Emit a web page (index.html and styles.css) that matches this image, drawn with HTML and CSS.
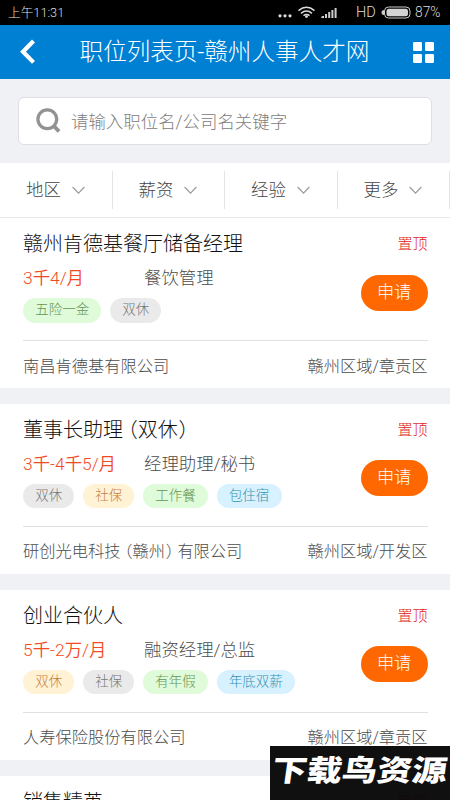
FILE: index.html
```html
<!DOCTYPE html>
<html lang="zh-CN">
<head>
<meta charset="utf-8">
<title>职位列表页-赣州人事人才网</title>
<link rel="stylesheet" href="styles.css">
</head>
<body>
<div class="status">
  <span class="time">上午11:31</span>
  <svg class="status-icons" width="78" height="25" viewBox="0 0 78 25" fill="none">
    <g fill="#ddd"><circle cx="2" cy="15.8" r="1.6"/><circle cx="7" cy="15.8" r="1.6"/><circle cx="12" cy="15.8" r="1.6"/></g>
    <g stroke="#ddd" stroke-width="1.5"><path d="M20.5 10.6Q28.500 4 36.500 10.600M23 13.300Q28.500 8.800 34 13.300M25.500 15.600Q28.500 13.200 31.500 15.600"/></g>
    <circle cx="28.500" cy="16.600" r="1.400" fill="#ddd"/>
    <g fill="#ccc"><path d="M44 16h2v2h-3zM47 14h2v4h-2zM50.200 12h2v6h-2zM53.400 10h2v8h-2zM56.600 8h2v10h-2z"/></g>
  </svg>
  <span class="hd">HD</span>
  <svg class="battery" width="30" height="13" viewBox="0 0 30 13"><rect x="3.500" y="1" width="25.500" height="11" rx="4" fill="none" stroke="#ccc"/><rect x="5.500" y="2.700" width="21.500" height="7.600" rx="2.500" fill="#d5d5d5"/><path d="M3 4Q.5 4 .5 6.500T3 9z" fill="#ccc"/></svg>
  <span class="pct">87%</span>
</div>
<header class="header">
  <svg class="back" width="16" height="26" viewBox="0 0 16 26"><path d="M13.500 2 3 12.700 13.500 23.400" fill="none" stroke="#fff" stroke-width="4.200"/></svg>
  <h1>职位列表页-赣州人事人才网</h1>
  <svg width="21" height="21" viewBox="0 0 21 21" fill="#fff"><rect width="9" height="9" rx="1.200"/><rect x="12" width="9" height="9" rx="1.200"/><rect y="12" width="9" height="9" rx="1.200"/><rect x="12" y="12" width="9" height="9" rx="1.200"/></svg>
</header>
<div class="search-wrap">
  <div class="search">
    <svg width="25" height="26" viewBox="0 0 25 26" fill="none" stroke="#929292"><circle cx="11.300" cy="11.300" r="9.400" stroke-width="3.200"/><path d="m17 17 6 6.500" stroke-width="4"/></svg>
    <span>请输入职位名/公司名关键字</span>
  </div>
</div>
<nav class="filters">
  <div class="filter">地区<svg class="chev" width="13" height="9" viewBox="0 0 13 9"><path d="M.6 1 6.500 7.200 12.400 1"/></svg></div>
  <div class="filter">薪资<svg class="chev" width="13" height="9" viewBox="0 0 13 9"><path d="M.6 1 6.500 7.200 12.400 1"/></svg></div>
  <div class="filter">经验<svg class="chev" width="13" height="9" viewBox="0 0 13 9"><path d="M.6 1 6.500 7.200 12.400 1"/></svg></div>
  <div class="filter">更多<svg class="chev" width="13" height="9" viewBox="0 0 13 9"><path d="M.6 1 6.500 7.200 12.400 1"/></svg></div>
</nav>
<main>
  <article class="card">
    <div class="top"><h2>赣州肯德基餐厅储备经理</h2><span class="pin">置顶</span></div>
    <div class="middle">
      <div class="info">
        <div class="line"><span class="pay">3千4/月</span><span>餐饮管理</span></div>
        <div class="tags"><span class="tag green">五险一金</span><span class="tag gray">双休</span></div>
      </div>
      <div class="apply">申请</div>
    </div>
    <div class="foot"><span>南昌肯德基有限公司</span><span>赣州区域/章贡区</span></div>
  </article>
  <article class="card">
    <div class="top"><h2>董事长助理<span class="paren">（</span>双休<span class="paren-end">）</span></h2><span class="pin">置顶</span></div>
    <div class="middle">
      <div class="info">
        <div class="line"><span class="pay">3千-4千5/月</span><span>经理助理/秘书</span></div>
        <div class="tags"><span class="tag gray">双休</span><span class="tag yellow">社保</span><span class="tag green">工作餐</span><span class="tag blue">包住宿</span></div>
      </div>
      <div class="apply">申请</div>
    </div>
    <div class="foot"><span>研创光电科技<span class="paren">（</span>赣州<span class="paren-end">）</span>有限公司</span><span>赣州区域/开发区</span></div>
  </article>
  <article class="card">
    <div class="top"><h2>创业合伙人</h2><span class="pin">置顶</span></div>
    <div class="middle">
      <div class="info">
        <div class="line"><span class="pay">5千-2万/月</span><span>融资经理/总监</span></div>
        <div class="tags"><span class="tag yellow">双休</span><span class="tag gray">社保</span><span class="tag green">有年假</span><span class="tag blue">年底双薪</span></div>
      </div>
      <div class="apply">申请</div>
    </div>
    <div class="foot"><span>人寿保险股份有限公司</span><span>赣州区域/章贡区</span></div>
  </article>
  <article class="card">
    <div class="top"><h2>销售精英</h2><span class="pin">置顶</span></div>
  </article>
</main>
<div class="watermark"><span>下载鸟资源</span></div>
</body>
</html>
```

FILE: styles.css
```css
* { box-sizing: border-box; }
html { height: 800px; overflow: hidden; }
body {
  margin: 0;
  width: 450px;
  height: 800px;
  overflow: hidden;
  position: relative;
  background: #f0f1f5;
  color: #4c4c4c;
  font-family: Roboto, "Noto Sans CJK SC", sans-serif;
  font-weight: 300;
}
h1, h2 { margin: 0; font-weight: 300; white-space: nowrap; }
svg { display: block; flex: none; }

.status {
  height: 25px;
  padding: 0 7px 0 8px;
  background: #000;
  color: #ddd;
  display: flex;
  align-items: center;
  font-size: 12.700px;
  line-height: 25px;
}
.time { flex: 1; }
.hd { width: 25px; font-size: 14.500px; }
.battery { margin-right: 4px; }
.pct { width: 28px; font-size: 13.800px; }

.header {
  height: 54px;
  padding: 0 16px 0 20px;
  background: #0080d3;
  color: #fff;
  display: flex;
  align-items: center;
  justify-content: space-between;
}
.header h1 { font-size: 23.600px; line-height: 50px; }

.search-wrap { padding: 18px; height: 84px; }
.search {
  height: 48px;
  display: flex;
  align-items: center;
  gap: 10px;
  padding: 0 0 1px 17px;
  background: #fff;
  border: 1px solid #dedfe2;
  border-radius: 6px;
  color: #808080;
  font-size: 17.450px;
}

.filters {
  height: 55px;
  padding: 8px 0;
  display: grid;
  grid-template-columns: repeat(4, 112.500px);
  background: #fff;
  border-bottom: 1px solid #e8e8e8;
}
.filter {
  display: flex;
  align-items: center;
  padding: 0 0 4px 26px;
  gap: 11px;
  height: 38px;
  border-right: 1px solid #e4e4e4;
  font-size: 17.400px;
  color: #444;
}
.chev { margin-top: 5px; fill: none; stroke: #999; stroke-width: 1.100; }

main { display: grid; gap: 16px; }
.card { height: 169.900px; padding: 0 22.400px 0 23px; background: #fff; }
.top { height: 49px; display: flex; align-items: center; justify-content: space-between; }
.top h2 { font-size: 20px; color: #111; }
.pin { font-size: 15px; color: #e01c1c; }
.paren { margin-left: -.26em; }
.paren-end { margin-left: .04em; margin-right: -.28em; }
.middle {
  height: 74px;
  display: flex;
  justify-content: space-between;
  border-bottom: 1px solid #e0e0e0;
}
.line { display: flex; height: 21px; line-height: 22px; font-size: 17.400px; }
.pay { width: 121px; color: #f24a22; font-weight: 350; }
.tags { display: flex; gap: 8.700px; margin-top: 10px; }
.tag {
  height: 24.500px;
  line-height: 23px;
  padding: 0 12.200px;
  border-radius: 13px;
  font-size: 13.500px;
}
.gray { background: #eaeaea; color: #777; }
.green { background: #e0fbd9; color: #649653; }
.yellow { background: #fff2d5; color: #c8803e; }
.blue { background: #d8f1ff; color: #3291b4; }
.apply {
  width: 67px;
  height: 36px;
  margin-top: 7.500px;
  border-radius: 18px;
  background: #ff6800;
  color: #fff;
  text-align: center;
  font-size: 17.200px;
  line-height: 34px;
}
.foot { height: 47px; display: flex; align-items: center; justify-content: space-between; font-size: 16.250px; }

.watermark {
  position: absolute;
  right: 0;
  bottom: 0;
  width: 180px;
  height: 54px;
  background: rgba(8, 8, 8, .97);
  color: #fff;
  font-weight: 900;
  font-size: 35px;
  line-height: 52px;
  text-align: center;
  white-space: nowrap;
}
.watermark span { display: inline-block; transform: skewX(-8deg) scaleY(.84); }
```
